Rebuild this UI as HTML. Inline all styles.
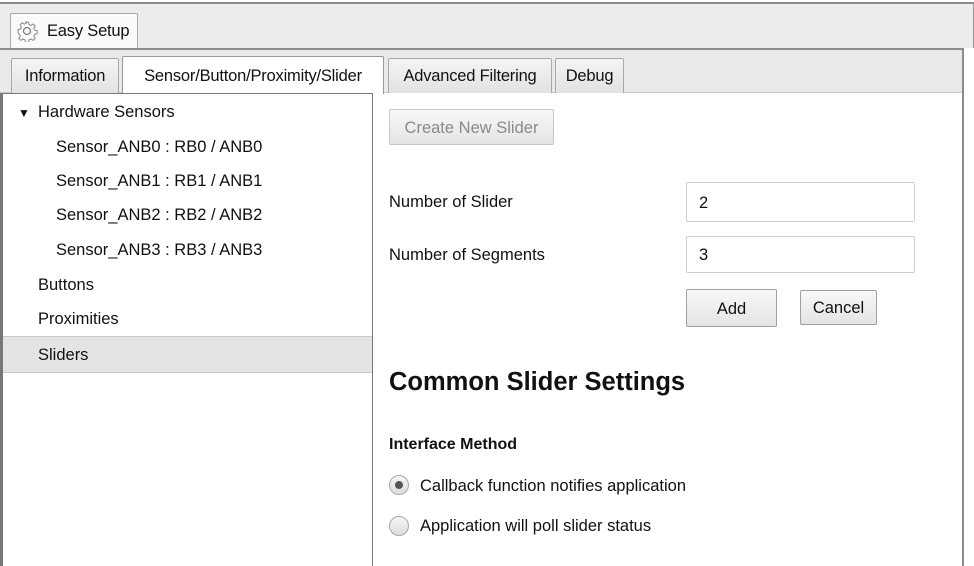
<!DOCTYPE html>
<html><head><style>
*{margin:0;padding:0;box-sizing:border-box}
body{width:974px;height:566px;background:#fff;font-family:"Liberation Sans",sans-serif;color:#111;position:relative;overflow:hidden;font-size:16.5px}
.a{position:absolute;white-space:nowrap}
.tab{position:absolute;border:1px solid #a8a8a8;border-bottom:none;background:linear-gradient(#f4f4f4,#e2e2e2);border-radius:2px 2px 0 0;font-size:16.5px;padding-top:8px;text-align:center;white-space:nowrap;letter-spacing:-0.2px}
.btn{position:absolute;border:1px solid #a0a0a0;border-radius:2px;background:linear-gradient(#f8f8f8,#e4e4e4);text-align:center;font-size:16.5px}
.inp{position:absolute;border:1px solid #cfcfcf;border-radius:2px;background:#fff;padding-left:12px;font-size:16.5px}
.radio{position:absolute;width:20px;height:20px;border-radius:50%;border:1px solid #a9a9a9;background:linear-gradient(#f6f6f6,#dcdcdc)}
</style></head><body>
<div class="a" style="left:0;top:2px;width:974px;height:46px;background:#ececec;border-top:2px solid #8a8a8a;border-right:1px solid #999"></div>
<div class="tab" style="left:10px;top:13px;width:128px;height:35px;background:#fafafa;text-align:left;padding-left:36px;padding-top:8px">Easy Setup</div>
<svg class="a" style="left:16px;top:20px" width="22" height="22" viewBox="0 0 22 22"><circle cx="11" cy="11" r="3.5" fill="none" stroke="#777" stroke-width="1.2"/><path d="M9.5 2h3l.5 2.5 2 .9 2.1-1.4 2.1 2.1-1.4 2.1.9 2 2.5.5v3l-2.5.5-.9 2 1.4 2.1-2.1 2.1-2.1-1.4-2 .9-.5 2.5h-3l-.5-2.5-2-.9-2.1 1.4-2.1-2.1 1.4-2.1-.9-2L2 12.5v-3l2.5-.5.9-2L4 4.9 6.1 2.8 8.2 4.2l2-.9z" fill="none" stroke="#888" stroke-width="1"/></svg>
<div class="a" style="left:0;top:48px;width:964px;height:518px;border-top:2px solid #8c8c8c;border-right:2px solid #8c8c8c;background:#fff"></div>
<div class="a" style="left:0;top:50px;width:962px;height:43px;background:#e9e9e9;border-bottom:1px solid #c8c8c8"></div>
<div class="tab" style="left:11px;top:58px;width:108px;height:35px;padding-top:8px">Information</div>
<div class="tab" style="left:122px;top:56px;width:262px;height:38px;background:#fff;border-color:#999;padding-top:10px">Sensor/Button/Proximity/Slider</div>
<div class="tab" style="left:388px;top:58px;width:164px;height:35px">Advanced Filtering</div>
<div class="tab" style="left:555px;top:58px;width:69px;height:35px">Debug</div>
<div class="a" style="left:0;top:93px;width:373px;height:473px;border-left:3px solid #777;border-right:1px solid #7a7a7a;border-top:1px solid #7a7a7a;background:#fff"></div>
<div class="a" style="left:18px;top:106px;font-size:12px">&#9660;</div>
<div class="a" style="left:38px;top:103px">Hardware Sensors</div>
<div class="a" style="left:56px;top:138px">Sensor_ANB0 : RB0 / ANB0</div>
<div class="a" style="left:56px;top:172px">Sensor_ANB1 : RB1 / ANB1</div>
<div class="a" style="left:56px;top:206px">Sensor_ANB2 : RB2 / ANB2</div>
<div class="a" style="left:56px;top:241px">Sensor_ANB3 : RB3 / ANB3</div>
<div class="a" style="left:38px;top:276px">Buttons</div>
<div class="a" style="left:38px;top:310px">Proximities</div>
<div class="a" style="left:3px;top:336px;width:369px;height:37px;background:#e4e4e4;border-top:1px solid #c8c8c8;border-bottom:1px solid #c8c8c8"></div>
<div class="a" style="left:38px;top:346px">Sliders</div>
<div class="btn" style="left:389px;top:109px;width:165px;height:36px;line-height:36px;color:#8a8a8a;border-color:#c6c6c6">Create New Slider</div>
<div class="a" style="left:389px;top:193px">Number of Slider</div>
<div class="inp" style="left:686px;top:182px;width:229px;height:40px;line-height:40px">2</div>
<div class="a" style="left:389px;top:246px">Number of Segments</div>
<div class="inp" style="left:686px;top:236px;width:229px;height:37px;line-height:37px">3</div>
<div class="btn" style="left:686px;top:289px;width:91px;height:38px;line-height:38px">Add</div>
<div class="btn" style="left:800px;top:290px;width:77px;height:35px;line-height:35px">Cancel</div>
<div class="a" style="left:389px;top:368px;font-size:25.5px;font-weight:bold">Common Slider Settings</div>
<div class="a" style="left:389px;top:436px;font-size:16px;font-weight:bold">Interface Method</div>
<div class="radio" style="left:389px;top:475px"><div style="position:absolute;left:5px;top:5px;width:8px;height:8px;border-radius:50%;background:#555"></div></div>
<div class="a" style="left:420px;top:477px">Callback function notifies application</div>
<div class="radio" style="left:389px;top:516px"></div>
<div class="a" style="left:420px;top:517px">Application will poll slider status</div>
</body></html>
